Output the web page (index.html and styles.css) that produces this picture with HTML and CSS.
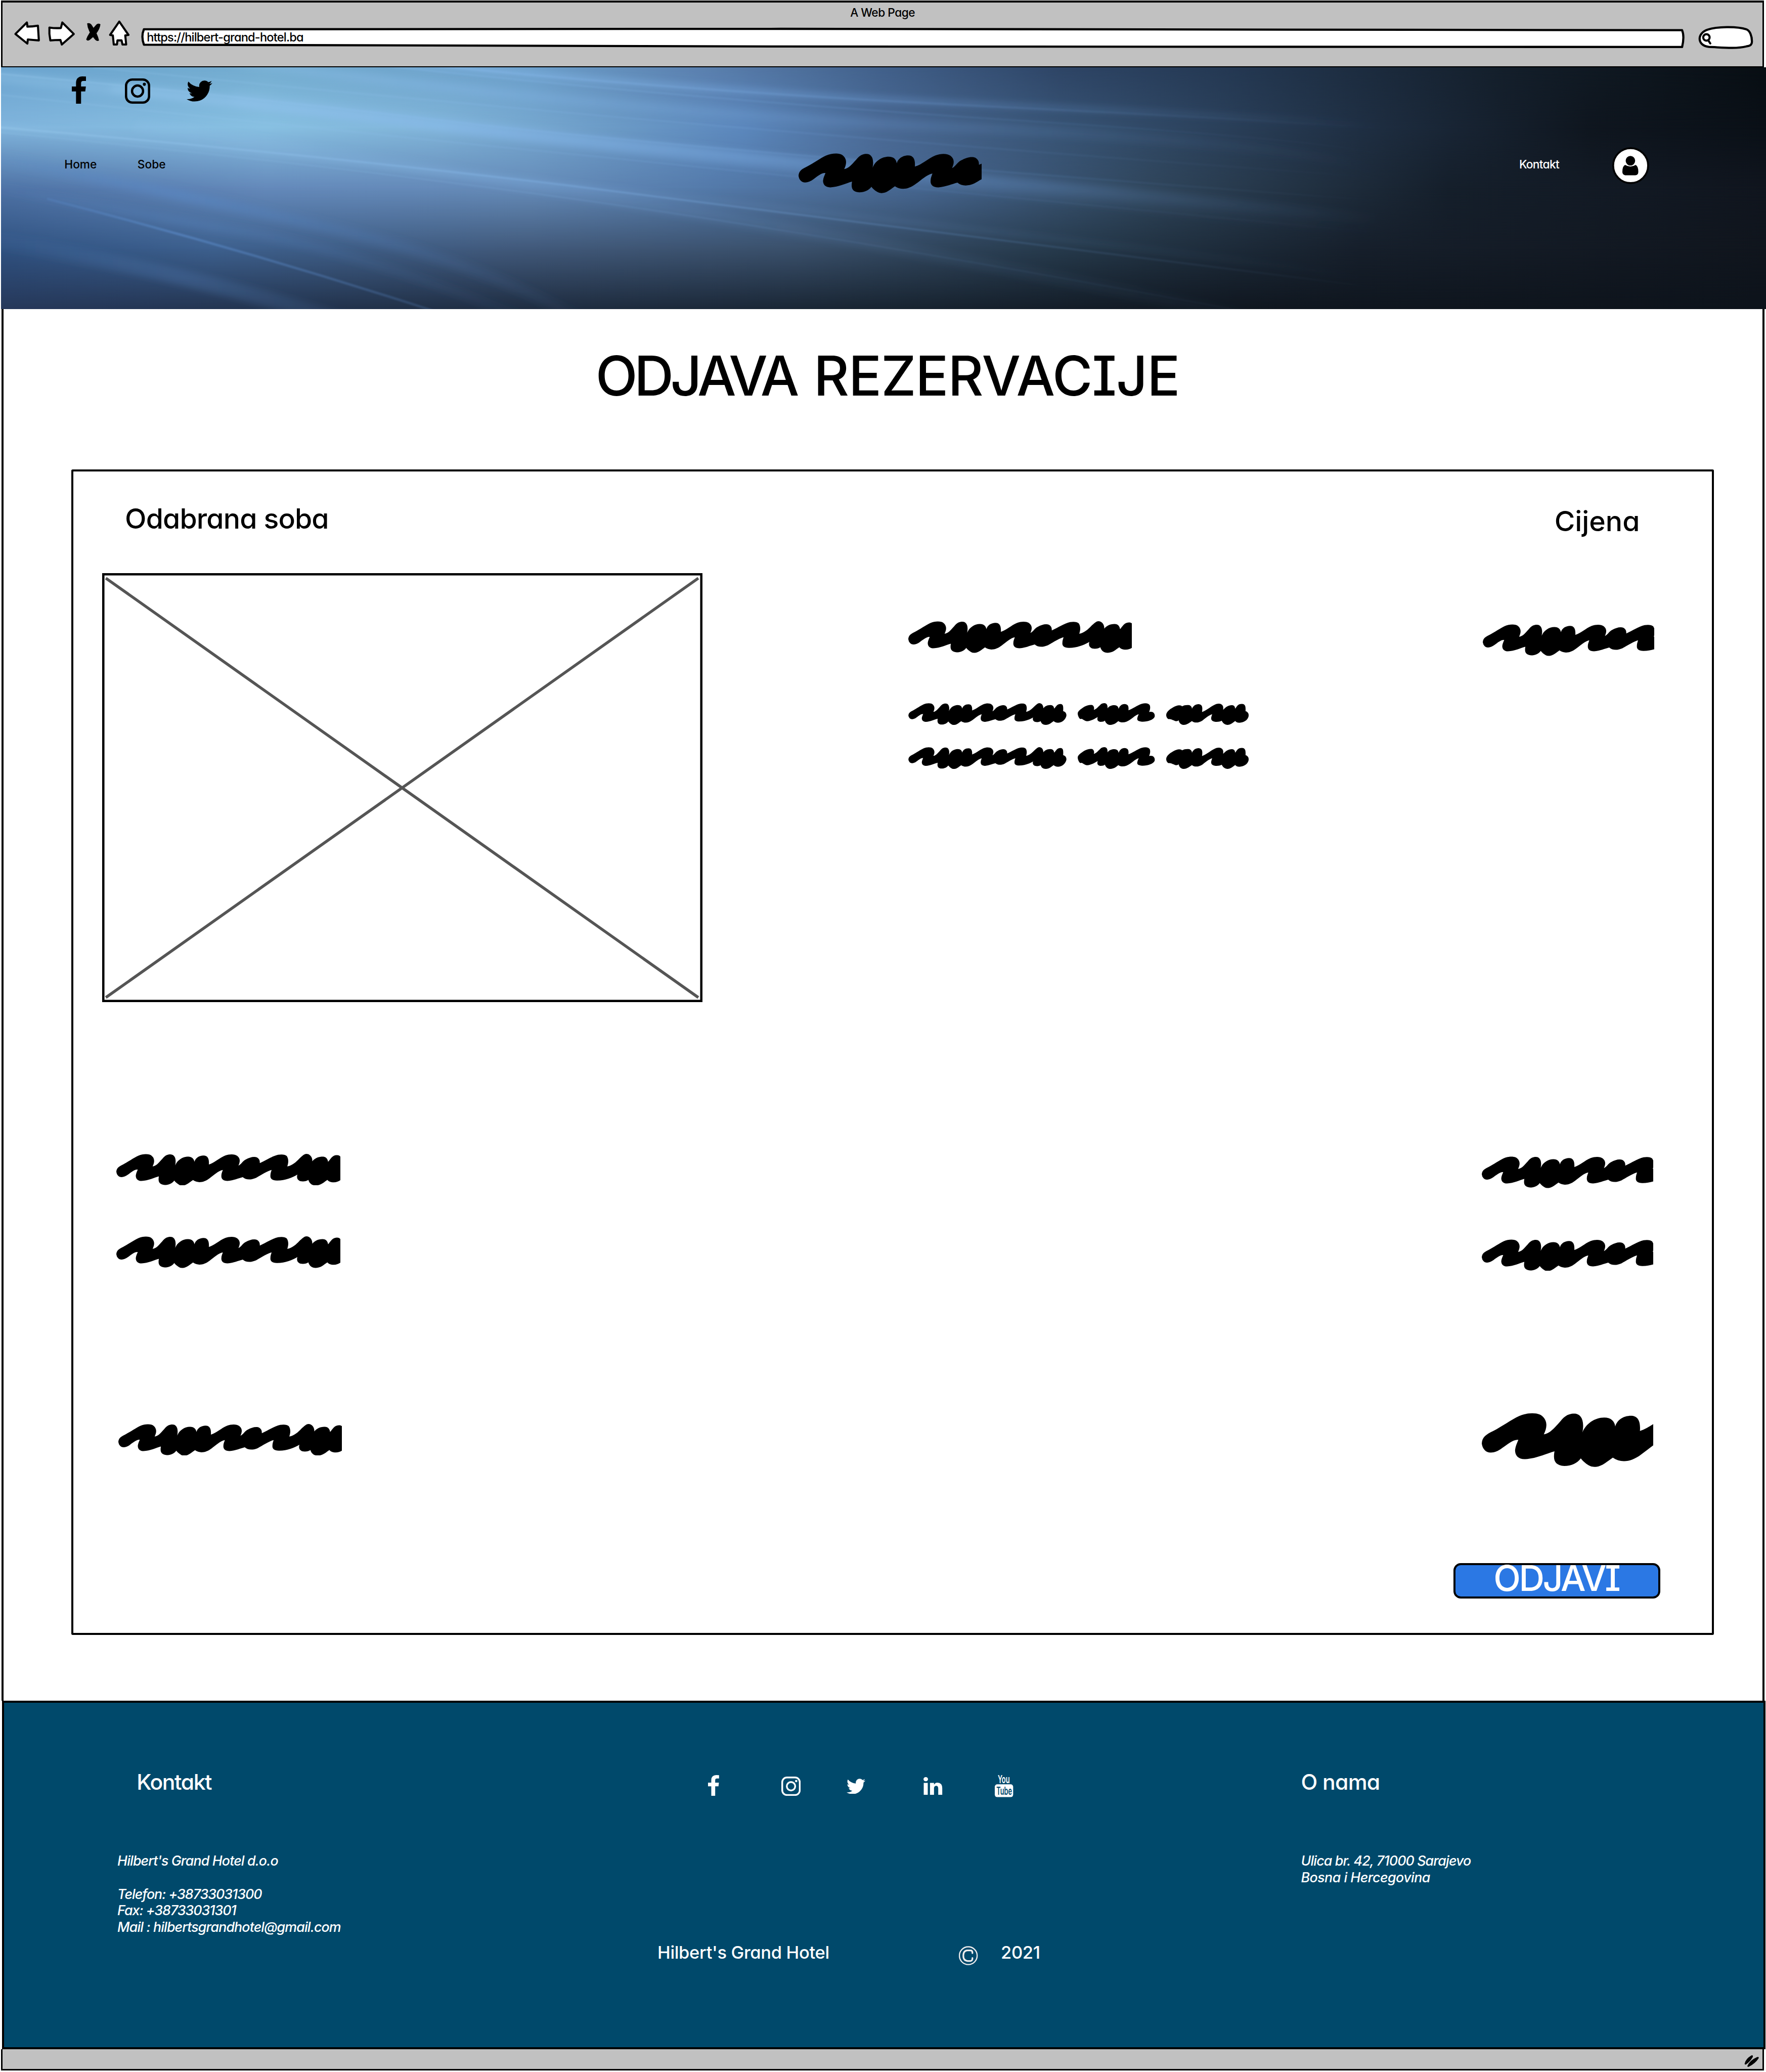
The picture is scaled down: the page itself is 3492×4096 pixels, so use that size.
FILE: index.html
```html
<!DOCTYPE html>
<html lang="bs">
<head>
<meta charset="utf-8">
<title>Odjava rezervacije</title>
<link rel="stylesheet" href="styles.css">
</head>
<body>
<svg class="defs" aria-hidden="true">
  <defs>
    <path id="scribble" transform="scale(.523 .3333) translate(-67 -93)" d="M67 210C68 185 77 176 95 162C115 146 140 118 158 105C180 90 205 92 214 105C228 124 226 150 218 175C232 173 243 152 258 126C270 102 280 96 292 96C308 96 318 120 312 168C320 135 342 111 365 111C382 111 390 125 392 145C396 120 412 104 430 104C446 104 454 122 452 162C475 152 495 120 520 104C540 92 560 94 570 106C584 124 582 145 575 170C588 160 592 140 605 130C622 115 640 108 652 116C664 128 664 140 664 153C690 135 715 108 740 99C755 95 770 97 776 107C784 125 784 150 778 175C800 168 815 145 828 124C840 108 848 93 858 93C872 93 884 115 882 142C890 125 905 111 925 111C940 111 946 125 948 145C957 130 965 100 985 101C1002 101 1004 120 1002 168C1015 172 1022 190 1022 208C1020 240 1000 277 972 279C958 279 950 272 945 263C930 278 918 299 897 299C880 299 870 285 866 263C860 270 852 273 843 273C825 272 815 258 820 228C800 248 770 266 737 267C715 268 707 255 708 235C708 220 711 208 713 198C695 205 665 235 648 250C625 266 605 262 593 245C575 252 555 266 530 270C510 270 503 255 504 235C504 220 508 210 510 198C490 205 475 230 455 252C430 282 405 285 386 264C375 275 360 298 345 299Q335 301 328 294C318 285 312 275 308 267C300 285 285 296 268 296C245 293 240 275 244 240C225 248 200 268 172 270C155 270 148 255 148 235C149 220 153 208 156 196C145 193 130 212 117 227C100 248 82 250 74 235Q68 225 67 210Z"/>
    <path id="word-b" transform="scale(.523 .3333) translate(-773 -626)" d="M773 693C773 680 785 665 800 650C812 640 830 634 836 641C842 650 842 660 840 670C850 665 858 650 866 638C872 628 878 626 884 626C895 628 898 640 897 661C902 645 915 638 926 639C938 640 942 650 943 663C948 645 955 632 968 632C982 634 986 645 984 672C1000 665 1020 640 1040 630C1055 624 1068 626 1073 640C1076 655 1074 668 1070 684Q1076 680 1084 684C1092 690 1095 702 1093 715C1088 735 1065 747 1042 747C1022 746 1018 735 1022 718C1023 710 1026 703 1027 699C1015 702 1005 720 990 735C975 752 955 758 942 743C935 752 925 767 908 768C895 768 888 750 886 740C882 746 876 748 868 748C855 745 853 735 856 716C845 728 828 743 812 744C802 742 795 730 789 728Q785 730 782 728C776 718 773 705 773 693Z"/>
    <path id="word-c" transform="scale(.523 .3333) translate(-1140 -626)" d="M1140 704C1140 685 1152 668 1168 654C1182 640 1200 634 1206 647C1215 638 1228 637 1238 640C1246 648 1247 655 1247 663C1252 645 1262 632 1276 633C1290 637 1292 650 1289 684C1310 672 1330 642 1348 632C1362 626 1372 632 1376 645C1378 655 1377 662 1377 670C1388 650 1400 638 1414 639C1424 641 1426 650 1427 662C1434 648 1438 631 1455 631C1470 632 1471 650 1470 678C1480 683 1484 695 1483 710C1480 735 1465 753 1445 754C1435 753 1430 748 1427 742C1418 752 1408 767 1394 768C1382 767 1374 752 1371 741C1362 748 1350 750 1342 747C1328 743 1325 730 1328 715C1329 708 1331 703 1331 699C1318 705 1305 722 1292 738C1275 756 1258 757 1247 743C1238 752 1226 768 1212 768C1200 766 1193 752 1192 738Q1188 744 1181 744C1170 740 1162 730 1154 730Q1150 731 1147 728C1142 720 1140 712 1140 704Z"/>
    <path id="facebook" d="M959 12v264H802q-86 0-116 36t-30 108v189h293l-39 296H656v759H350V905H95V609h255V391q0-186 104-288.5T731 0q147 0 228 12z"/>
    <path id="twitter" d="M1620 408q-67 98-162 167 1 14 1 42 0 130-38 259.5T1305.5 1125 1121 1335.5t-258 146-323 54.5q-271 0-496-145 35 4 78 4 225 0 401-138-105-2-188-64.5T221 1033q33 5 61 5 43 0 85-11-112-23-185.500-111.500T108 710v-4q68 38 146 41-66-44-105-115t-39-154q0-88 44-163 121 149 294.500 238.500T820 653q-8-38-8-74 0-134 94.500-228.500T1135 256q140 0 236 102 109-21 205-78-37 115-142 178 93-10 186-50z"/>
    <g id="instagram"><rect x="2.500" y="2.500" width="50" height="50" rx="13.500" fill="none" stroke="currentColor" stroke-width="5"/><circle cx="27.500" cy="27.500" r="12" fill="none" stroke="currentColor" stroke-width="5"/><circle cx="42.300" cy="12.700" r="3.400"/></g>
    <path id="linkedin" d="M349 625v991H19V625h330zm21-306q1 73-50.500 122T184 490h-2q-82 0-132-49T0 319q0-74 51.500-122.500T186 148t133 48.500T370 319zm1166 729v568h-329v-530q0-105-40.500-164.500T1040 862q-63 0-105.500 34.500T871 982q-11 30-11 81v553H531q2-399 2-647t-1-296l-1-48h329v144h-2q20-32 41-56t56.500-52 87-43.500T1156 602q171 0 275 113.500t104 332.500z"/>
  </defs>
</svg>
<div class="page">
  <header class="chrome">
    <div class="chrome-title">A Web Page</div>
    <div class="chrome-row">
      <svg class="chrome-icons" viewBox="28 44 260 60">
        <g fill="#fff" stroke="#000" stroke-width="4.500" stroke-linejoin="round">
          <path d="M34 75L59 50Q60 55 60 59Q72 59 83 57Q84 73 85 89Q72 88 61 87L60 96Z"/>
          <path d="M108 61Q121 63 133 62L136 50L161 75L135 98L132 88Q120 88 110 89Q107 75 108 61Z"/>
          <path d="M260 48L280 77L273 78L275 98H267L265 89H256L255 98H248L246 78L240 77Z"/>
        </g>
        <path d="M190 52Q197 50 201 57Q213 75 216 89Q211 92 207 87Q191 69 190 52Z"/>
        <path d="M219 54Q213 50 208 57Q192 74 188 87Q191 92 197 87Q217 71 219 54Z"/>
      </svg>
      <div class="address">
        <svg class="address-frame" viewBox="306 58 3362 50"><path d="M314 64.500L1700 63.500L3661 66.500Q3666.500 80 3661 103L1700 102L314 98Q307.500 80 314 64.500Z" fill="#fff" stroke="#000" stroke-width="4.700" stroke-linejoin="round"/></svg>
        <span class="url">https://hilbert-grand-hotel.ba</span>
      </div>
      <svg class="search" viewBox="3693 54 124 56">
        <path d="M3718 102C3692 99 3692 72 3716 64.500C3735 58 3780 57 3800 64C3808 67 3812 79 3812 90C3812 99 3806 100 3800 101C3775 107 3745 103 3718 102Z" fill="#fff" stroke="#000" stroke-width="4.700"/>
        <circle cx="3713" cy="81.500" r="7" fill="none" stroke="#000" stroke-width="4.500"/>
        <path d="M3717 88L3721.500 94.500" stroke="#000" stroke-width="4.500" stroke-linecap="round"/>
      </svg>
    </div>
  </header>

  <section class="hero">
    <div class="hero-art">
      <div class="shade shade-1"></div><div class="shade shade-2"></div><div class="shade shade-3"></div><div class="shade shade-4"></div><div class="shade shade-5"></div>
      <svg class="rays" viewBox="0 0 3840 526">
        <defs>
          <linearGradient id="fade" gradientUnits="userSpaceOnUse" x1="0" y1="0" x2="3000" y2="0"><stop offset="0" stop-color="#9fd0f2" stop-opacity=".5"/><stop offset=".35" stop-color="#86b8ea" stop-opacity=".65"/><stop offset=".65" stop-color="#6f9fd8" stop-opacity=".4"/><stop offset="1" stop-color="#5d86bd" stop-opacity="0"/></linearGradient>
          <linearGradient id="fade-low" gradientUnits="userSpaceOnUse" x1="0" y1="0" x2="1300" y2="0"><stop offset="0" stop-color="#5a8ac8" stop-opacity=".2"/><stop offset=".3" stop-color="#5a8ac8" stop-opacity=".8"/><stop offset="1" stop-color="#46699a" stop-opacity=".1"/></linearGradient>
          <filter id="soft" filterUnits="userSpaceOnUse" x="-100" y="-100" width="4000" height="800"><feGaussianBlur stdDeviation="10 7"/></filter>
          <filter id="thin" filterUnits="userSpaceOnUse" x="-100" y="-100" width="4000" height="800"><feGaussianBlur stdDeviation="2"/></filter>
        </defs>
        <g fill="none" stroke="url(#fade)" filter="url(#soft)">
          <path d="M-60 16Q500 70 980 131T3000 330" stroke-width="26" opacity=".5"/>
          <path d="M240 46Q1000 135 1838 212T3000 330" stroke-width="20" opacity=".5"/>
          <path d="M500 -14Q1300 95 2083 131T3000 230" stroke-width="22" opacity=".45"/>
          <path d="M860 -14Q1500 53 2205 84T3186 144" stroke-width="12" opacity=".9"/>
          <path d="M-60 124Q900 220 1960 336T3000 470" stroke-width="10" opacity=".4"/>
          <path d="M500 66Q1800 232 3000 350" stroke-width="34" opacity=".3"/>
          <path d="M300 130Q1600 310 2700 540" stroke-width="28" opacity=".22"/>
        </g>
        <g fill="none" stroke="url(#fade)" filter="url(#thin)">
          <path d="M-60 9Q500 60 980 118T3000 290" stroke-width="3" opacity=".6"/>
          <path d="M-60 126Q612 182 1225 256T3000 480" stroke-width="3.500" opacity=".7"/>
          <path d="M-60 136Q612 200 1200 280T2700 530" stroke-width="2" opacity=".4"/>
          <path d="M900 -8Q1500 54 2205 88T3186 148" stroke-width="4" opacity=".6"/>
          <path d="M750 -12Q1500 70 2205 115T3000 190" stroke-width="3" opacity=".5"/>
          <path d="M200 0Q1470 130 3000 240" stroke-width="3" opacity=".4"/>
          <path d="M0 60Q1300 200 3000 360" stroke-width="3" opacity=".35"/>
        </g>
        <g fill="none" stroke="url(#fade-low)" filter="url(#soft)">
          <path d="M-60 190Q400 275 735 354T1300 570" stroke-width="24" opacity=".6"/>
          <path d="M-60 252Q300 320 540 360T1200 570" stroke-width="20" opacity=".3"/>
          <path d="M-60 370Q400 440 800 570" stroke-width="34" opacity=".3"/>
        </g>
        <path d="M100 286Q540 399 960 536" fill="none" stroke="url(#fade-low)" stroke-width="5" filter="url(#thin)" opacity=".8"/>
      </svg>
    </div>
    <div class="hero-social">
      <svg class="h-fb" viewBox="95 0 864 1664" preserveAspectRatio="none"><use href="#facebook"/></svg>
      <svg class="h-ig" viewBox="0 0 55 55"><use href="#instagram"/></svg>
      <svg class="h-tw" viewBox="44 256 1576 1280"><use href="#twitter"/></svg>
    </div>
    <nav class="hero-nav">
      <a>Home</a>
      <a>Sobe</a>
      <svg class="logo" viewBox="0 0 317.400 68.700"><use href="#scribble"/></svg>
      <a class="light">Kontakt</a>
      <svg class="avatar" viewBox="0 0 80 80"><circle cx="40" cy="40" r="38" fill="#fff" stroke="#000" stroke-width="4"/><ellipse cx="39.500" cy="29.500" rx="10.300" ry="10.500"/><path d="M28 38.500Q34 42 39.500 42T51 38.500Q57 42 56.700 54Q56.500 61 50 61H28Q22 60 22 54Q22 41 28 38.500Z"/></svg>
    </nav>
  </section>

  <main class="content">
    <h1><span class="tight">ODJAVA</span> REZERVACIJE</h1>
    <section class="panel">
      <div class="panel-head">
        <h2 class="head-room">Odabrana soba</h2>
        <h2 class="head-price">Cijena</h2>
      </div>
      <div class="room">
        <svg class="photo" viewBox="0 0 1306 933"><rect x="2.500" y="2.500" width="1301" height="928" fill="#fff" stroke="#000" stroke-width="5"/><path d="M8 11L1297 923M1297 11L8 923" stroke="#555" stroke-width="6.200"/></svg>
        <div class="details">
          <svg class="long" viewBox="0 0 487 68.700"><use href="#scribble"/></svg>
          <div class="words">
            <svg class="word-a" viewBox="0 0 500 68.700"><use href="#scribble"/></svg>
            <svg class="word-b" viewBox="0 0 168 47.300"><use href="#word-b"/></svg>
            <svg class="word-c" viewBox="0 0 180 47.300"><use href="#word-c"/></svg>
          </div>
          <div class="words">
            <svg class="word-a" viewBox="0 0 500 68.700"><use href="#scribble"/></svg>
            <svg class="word-b" viewBox="0 0 168 47.300"><use href="#word-b"/></svg>
            <svg class="word-c" viewBox="0 0 180 47.300"><use href="#word-c"/></svg>
          </div>
        </div>
        <svg class="price" viewBox="0 0 373 68.700"><use href="#scribble"/></svg>
      </div>
      <div class="line line-a">
        <svg class="long" viewBox="0 0 487 68.700"><use href="#scribble"/></svg>
        <svg class="price-sm" viewBox="0 0 373 68.700"><use href="#scribble"/></svg>
      </div>
      <div class="line line-b">
        <svg class="long" viewBox="0 0 487 68.700"><use href="#scribble"/></svg>
        <svg class="price-sm" viewBox="0 0 373 68.700"><use href="#scribble"/></svg>
      </div>
      <div class="line line-total">
        <svg class="long" viewBox="0 0 487 68.700"><use href="#scribble"/></svg>
        <svg class="total" viewBox="0 0 218 68.700"><use href="#scribble"/></svg>
      </div>
      <button class="checkout">ODJAVI</button>
    </section>
  </main>

  <footer class="footer">
    <div class="contact">
      <h3>Kontakt</h3>
      <address>Hilbert's Grand Hotel d.o.o<br><br><span class="digits">Telefon: +38733031300<br>Fax: +38733031301</span><br>Mail : hilbertsgrandhotel@gmail.com</address>
    </div>
    <div class="center">
      <div class="footer-social">
        <svg class="f-fb" viewBox="95 0 864 1664" preserveAspectRatio="none"><use href="#facebook"/></svg>
        <svg class="f-ig" viewBox="0 0 55 55"><use href="#instagram"/></svg>
        <svg class="f-tw" viewBox="44 256 1576 1280"><use href="#twitter"/></svg>
        <svg class="f-in" viewBox="0 148 1536 1468"><use href="#linkedin"/></svg>
        <svg class="f-yt" viewBox="0 0 40 48"><rect y="20" width="40" height="28" rx="5.500"/><text x="6.500" y="18" font-size="24" textLength="26" lengthAdjust="spacingAndGlyphs">You</text><text class="cut" x="3.500" y="43.300" font-size="23.500" textLength="34" lengthAdjust="spacingAndGlyphs">Tube</text></svg>
      </div>
      <div class="copy">
        <span>Hilbert's Grand Hotel</span>
        <svg class="copyright" viewBox="0 0 41 42"><g fill="none" stroke="#f0eeee"><circle cx="20.500" cy="21" r="19.300" stroke-width="2.600"/><path d="M29.500 15.500V14Q29.500 9.500 25 9.500H18.500Q9.700 10 9.700 21T19 32.500H25Q29.500 32 29.500 27.500V26" stroke-width="3.600" stroke-linecap="round"/></g></svg>
        <span>2021</span>
      </div>
    </div>
    <div class="about">
      <h3>O nama</h3>
      <address>Ulica br. 42, 71000 Sarajevo<br><span class="city">Bosna i Hercegovina</span></address>
    </div>
  </footer>
  <div class="statusbar"><svg class="grip" viewBox="0 0 34 28"><path d="M1 20Q4 8 17 2Q20 3 18 7Q12 17 4 22Q0 23 1 20ZM7 25Q12 13 28 6Q33 5 31 9Q24 20 10 27Q6 28 7 25Z"/></svg></div>
</div>
</body>
</html>
```
FILE: styles.css
```css
/* 1rem equals 100 units of a 3842-unit-wide layout */
html { font-size: calc(100vw / 38.42); }
* { box-sizing: border-box; }
body { margin: 0; background: #fff; font-family: Inter, "Open Sans", sans-serif; font-weight: 500; font-feature-settings: "cv11", "cv08"; color: #000; overflow: hidden; white-space: nowrap; }
h1, h2, h3 { margin: 0; font-weight: 500; }
svg { display: block; }
.defs { position: absolute; width: 0; height: 0; }
.page { width: 38.42rem; height: 45.06rem; display: flex; flex-direction: column; }

.chrome { height: 1.45rem; margin: .01rem .04rem 0 .02rem; border: .04rem solid #000; border-top-width: .05rem; border-bottom-width: .03rem; background: #c1c1c1; flex: none; }
.chrome-title { height: .38rem; padding-top: .095rem; font-size: .25rem; line-height: .25rem; letter-spacing: -.023em; text-align: center; }
.chrome-row { display: flex; align-items: flex-start; padding-left: .22rem; }
.chrome-icons { width: 2.6rem; height: .6rem; }
.address { position: relative; width: 33.62rem; height: .5rem; margin: .14rem .25rem 0 .18rem; padding: .11rem 0 0 .14rem; font-size: .26rem; line-height: .26rem; letter-spacing: -.035em; }
.address-frame { position: absolute; inset: 0; width: 100%; height: 100%; }
.url { position: relative; }
.search { width: 1.24rem; height: .56rem; margin-top: .1rem; }

.hero { position: relative; height: 5.26rem; margin-left: .02rem; padding-top: .2rem; flex: none; overflow: hidden; }
.hero-art, .shade { position: absolute; inset: 0; }
.rays { position: absolute; inset: 0; width: 100%; height: 100%; }
.shade-1 { background: linear-gradient(90deg, #6ba4cf, #74add0 15%, #6c9fca 30%, #5a7fae 40%, #41608a 50%, #2e4566 60%, #243852 70%, #141f2b 85%, #080e13); }
.shade-2 { background: linear-gradient(90deg, #80b4dc, #88c0e2 15%, #80b4d8 25%, #6b9ac6 35%, #5c88bd 42%, #4a6994 50%, #385475 60%, #1f2f43 77%, #0f161f 90%, #0a1017); mask-image: linear-gradient(transparent, #000 25%); }
.shade-3 { background: linear-gradient(90deg, #4e72a5, #6489ba 15%, #658bb8 30%, #547aaa 40%, #466690 52%, #30465c 65%, #151f2b 82%, #10151e); mask-image: linear-gradient(transparent 25%, #000 50%); }
.shade-4 { background: linear-gradient(90deg, #2f5180, #3d608e 12%, #41597a 30%, #3a506b 45%, #263a4c 60%, #161f2b 77%, #10151d); mask-image: linear-gradient(transparent 50%, #000 75%); }
.shade-5 { background: linear-gradient(90deg, #26385a, #23344f 15%, #1f2d41 30%, #182431 50%, #101720 70%, #0d131b); mask-image: linear-gradient(transparent 75%, #000); }
.hero-social { position: relative; display: flex; align-items: flex-start; height: .6rem; padding-left: 1.54rem; }
.h-fb { width: .31rem; height: .6rem; }
.h-ig { width: .55rem; height: .55rem; margin: .05rem 0 0 .85rem; }
.h-tw { width: .56rem; height: .46rem; margin: .09rem 0 0 .79rem; }
.hero-nav { position: relative; display: grid; grid-template-columns: 1.59rem 14.37rem 15.69rem 2.02rem .8rem; align-items: start; margin-top: .94rem; padding-left: 1.38rem; font-size: .25rem; line-height: .26rem; }
.hero-nav a { margin-top: .245rem; }
.hero-nav .light { color: #fff; letter-spacing: -.032em; }
.logo { width: 3.99rem; height: .864rem; margin: .137rem 0 0 .01rem; }
.avatar { width: .8rem; height: .8rem; margin-left: .01rem; }

.content { flex: none; height: 30.27rem; margin: 0 .035rem; border: solid #000; border-width: 0 .045rem; background: #fff; }
h1 { padding: .865rem 0 0 .2rem; font-size: 1.19rem; line-height: 1.19rem; letter-spacing: -.01em; word-spacing: .07em; text-align: center; }
.tight { letter-spacing: -.061em; }
.panel { width: 35.73rem; height: 25.35rem; margin: 1.435rem 0 0 1.475rem; border: .05rem solid #000; border-radius: .03rem; }
.panel-head { display: grid; grid-template-columns: 31.1rem auto; height: 2.21rem; padding: .715rem 0 0 1.12rem; }
h2 { font-size: .61rem; line-height: .61rem; }
.head-room { letter-spacing: -.016em; }
.head-price { margin-top: .06rem; }
.room { display: grid; grid-template-columns: 17.54rem 12.5rem auto; height: 9.33rem; padding-left: .62rem; }
.photo { width: 13.06rem; height: 9.33rem; }
.details { padding-top: 1.05rem; }
.long { width: 4.87rem; height: .687rem; }
.price, .price-sm { width: 3.73rem; height: .687rem; }
.price { margin-top: 1.117rem; }
.words { display: flex; gap: .242rem; margin-top: .483rem; }
.long + .words { margin-top: 1.09rem; }
.word-a { width: 3.447rem; height: .473rem; }
.word-b { width: 1.68rem; height: .473rem; }
.word-c { width: 1.8rem; height: .473rem; }
.line { display: grid; grid-template-columns: 29.705rem auto; height: .75rem; padding-left: .935rem; }
.line-a { margin-top: 3.3rem; }
.line-b { margin-top: 1.05rem; }
.price-sm { margin-top: .06rem; }
.line-total { height: 1.174rem; margin-top: 3.09rem; }
.line-total .long { margin: .236rem 0 0 .04rem; }
.total { width: 3.725rem; height: 1.174rem; }
.checkout { display: flex; align-items: center; justify-content: center; width: 4.5rem; height: .78rem; margin: 2.085rem 0 0 30.025rem; padding: 0 .03rem .11rem 0; border: .045rem solid #000; border-radius: .16rem; background: #2b78e4; color: #fff; font: inherit; font-size: .77rem; line-height: .77rem; letter-spacing: -.049em; font-feature-settings: inherit; }

.footer { flex: none; display: grid; grid-template-columns: 11.75rem 14rem auto; width: 38.37rem; height: 7.58rem; margin-left: .04rem; padding-left: 2.47rem; border: .045rem solid #000; border-bottom-width: .05rem; background: #00496b; color: #fff; fill: #fff; }
.contact, .about { padding-top: 1.495rem; }
h3 { font-size: .47rem; line-height: .47rem; letter-spacing: -.018em; }
.contact h3 { padding-left: .42rem; letter-spacing: -.034em; }
address { margin-top: 1.295rem; font-size: .295rem; line-height: .36rem; letter-spacing: -.033em; font-style: italic; }
.digits { letter-spacing: -.038em; }
.city { letter-spacing: -.02em; }
.center { padding-top: 1.575rem; }
.footer-social { display: grid; grid-template-columns: 1.59rem 1.42rem 1.68rem 1.55rem auto; height: .48rem; padding-left: 1.1rem; }
.f-fb { width: .24rem; height: .45rem; }
.f-ig { width: .42rem; height: .42rem; margin-top: .03rem; }
.f-tw { width: .41rem; height: .34rem; margin-top: .07rem; }
.f-in { width: .41rem; height: .39rem; margin-top: .04rem; }
.f-yt { width: .4rem; height: .48rem; overflow: visible; font-weight: 600; letter-spacing: 0; }
.cut { fill: #00496b; }
.copy { display: grid; grid-template-columns: 6.56rem .91rem auto; margin-top: 3.19rem; font-size: .38rem; line-height: .38rem; letter-spacing: -.01em; }
.copyright { width: .41rem; height: .42rem; margin-top: .045rem; }

.statusbar { flex: none; display: flex; justify-content: flex-end; width: 38.36rem; height: .46rem; margin-left: .02rem; padding: .11rem .06rem 0 0; border: solid #000; border-width: 0 .04rem .04rem; background: #c1c1c1; }
.grip { width: .34rem; height: .28rem; }
```
